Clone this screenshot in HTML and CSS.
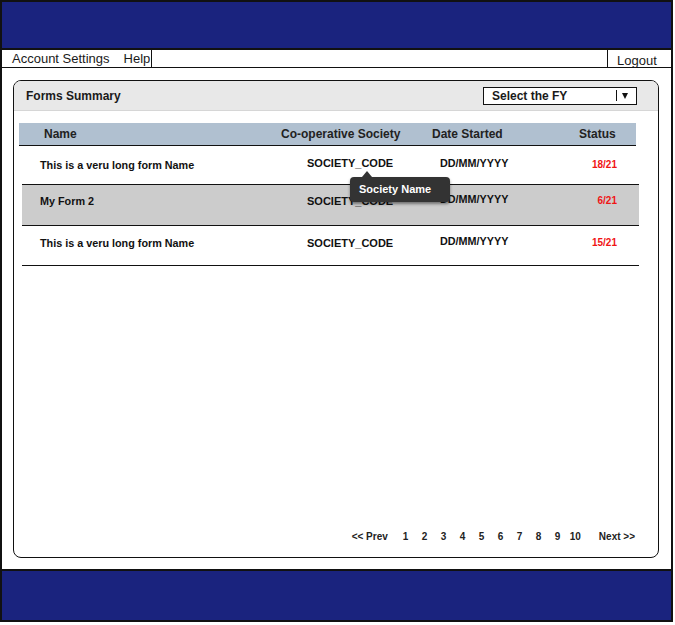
FILE: index.html
```html
<!DOCTYPE html>
<html>
<head>
<meta charset="utf-8">
<title>Forms Summary</title>
<link rel="stylesheet" href="styles.css">
</head>
<body>
<div class="frame">
  <div class="topbar"></div>
  <nav class="nav">
    <div class="nav-left"><span>Account Settings</span><span>Help</span></div>
    <div class="nav-right">Logout</div>
  </nav>
  <main class="main">
    <section class="panel">
      <header class="panel-head">
        <h1 class="panel-title">Forms Summary</h1>
        <div class="select">
          <span>Select the FY</span>
          <span class="sep"></span>
          <span class="caret"></span>
        </div>
      </header>
      <div class="table">
        <div class="thead">
          <span>Name</span>
          <span>Co-operative Society</span>
          <span>Date Started</span>
          <span>Status</span>
        </div>
        <div class="row r1">
          <span class="c-name">This is a veru long form Name</span>
          <span class="c-code">SOCIETY_CODE</span>
          <span class="c-date">DD/MM/YYYY</span>
          <span class="c-status">18/21</span>
          <div class="tooltip">Society Name</div>
        </div>
        <div class="row r2">
          <span class="c-name">My Form 2</span>
          <span class="c-code">SOCIETY_CODE</span>
          <span class="c-date">DD/MM/YYYY</span>
          <span class="c-status">6/21</span>
        </div>
        <div class="row r3">
          <span class="c-name">This is a veru long form Name</span>
          <span class="c-code">SOCIETY_CODE</span>
          <span class="c-date">DD/MM/YYYY</span>
          <span class="c-status">15/21</span>
        </div>
      </div>
      <div class="pager">
        <span class="prev">&lt;&lt; Prev</span>
        <span class="num first">1</span>
        <span class="num">2</span>
        <span class="num">3</span>
        <span class="num">4</span>
        <span class="num">5</span>
        <span class="num">6</span>
        <span class="num">7</span>
        <span class="num">8</span>
        <span class="num">9</span>
        <span class="num ten">10</span>
        <span class="next">Next &gt;&gt;</span>
      </div>
    </section>
  </main>
  <div class="footer"></div>
</div>
</body>
</html>
```

FILE: styles.css
```css
body {
  margin: 0;
  background: #fff;
  font-family: "Liberation Sans", Arial, sans-serif;
  color: #1a1a1a;
}

.frame {
  width: 673px;
  height: 622px;
  box-sizing: border-box;
  border: 2px solid #111;
  display: flex;
  flex-direction: column;
}

.topbar {
  flex: none;
  height: 46px;
  background: #1a237e;
  border-bottom: 2px solid #111;
}

.nav {
  flex: none;
  height: 17px;
  border-bottom: 1px solid #111;
  display: flex;
  justify-content: space-between;
}

.nav-left {
  display: flex;
  gap: 14px;
  padding: 0 1px 0 10px;
  border-right: 1px solid #111;
  font-size: 13px;
  line-height: 17px;
}

.nav-right {
  width: 64px;
  box-sizing: border-box;
  border-left: 1px solid #111;
  padding: 4px 0 0 9px;
  font-size: 13px;
  line-height: 14px;
  height: 18px;
}

.main {
  flex: 1;
  display: flex;
  padding: 12px 12px 11px 11px;
}

.panel {
  flex: 1;
  display: flex;
  flex-direction: column;
  border: 1px solid #111;
  border-radius: 8px;
}

.panel-head {
  height: 29px;
  background: #e8e8e8;
  border-bottom: 1px solid #d6d6d6;
  border-radius: 7px 7px 0 0;
  display: flex;
  align-items: center;
  justify-content: space-between;
  padding: 0 21px 0 12px;
}

.panel-title {
  margin: 0;
  font-size: 12px;
  font-weight: bold;
}

.select {
  width: 154px;
  height: 18px;
  box-sizing: border-box;
  border: 1px solid #111;
  background: #fff;
  display: flex;
  align-items: center;
  padding: 0 8px 0 8px;
  font-size: 12px;
  font-weight: bold;
}

.sep {
  margin-left: auto;
  width: 1px;
  height: 11px;
  background: #111;
}

.caret {
  margin-left: 5px;
  width: 0;
  height: 0;
  border-left: 3.5px solid transparent;
  border-right: 3.5px solid transparent;
  border-top: 6px solid #111;
}

.table {
  margin: 12px 0 0 5px;
  width: 617px;
}

.thead {
  height: 22px;
  background: #b0c0d0;
  border-bottom: 1px solid #111;
  display: grid;
  grid-template-columns: 237px 151px 147px 1fr;
  align-items: center;
  padding-left: 25px;
  font-size: 12px;
  font-weight: bold;
  color: #222;
}

.row {
  position: relative;
  margin-left: 3px;
  width: 617px;
  box-sizing: border-box;
  border-bottom: 1px solid #111;
  display: grid;
  grid-template-columns: 267px 133px 151px 1fr;
  align-items: start;
  padding-left: 18px;
  padding-right: 22px;
  font-size: 10.8px;
  line-height: 12px;
  font-weight: bold;
  color: #111;
}

.r1 { height: 39px; padding-top: 13px; }
.r2 { height: 41px; padding-top: 10px; background: #cccccc; }
.r3 { height: 40px; padding-top: 11px; }

.c-code { font-size: 11px; }
.c-date { margin-top: -2px; }
.r1 .c-code { margin-top: -2px; }

.c-status {
  text-align: right;
  color: #f01414;
  font-size: 10px;
}

.tooltip {
  position: absolute;
  left: 328px;
  top: 31px;
  width: 100px;
  height: 25px;
  box-sizing: border-box;
  padding-left: 9px;
  background: #333;
  border-radius: 4px;
  box-shadow: 0 2px 3px rgba(0, 0, 0, 0.45);
  color: #fff;
  font-size: 11px;
  line-height: 25px;
  font-weight: bold;
  z-index: 2;
}

.tooltip::before {
  content: "";
  position: absolute;
  left: 12px;
  top: -6px;
  border-left: 5.5px solid transparent;
  border-right: 5.5px solid transparent;
  border-bottom: 6px solid #333;
}

.pager {
  margin-top: auto;
  display: flex;
  justify-content: flex-end;
  padding: 0 23px 14px 0;
  font-size: 10px;
  line-height: 12px;
  font-weight: bold;
  color: #222;
}

.num { margin-left: 13.44px; }
.num.first { margin-left: 15px; }
.num.ten { margin-left: 9.4px; }
.next { margin-left: 18px; }

.footer {
  flex: none;
  height: 49px;
  background: #1a237e;
  border-top: 2px solid #111;
}
```
